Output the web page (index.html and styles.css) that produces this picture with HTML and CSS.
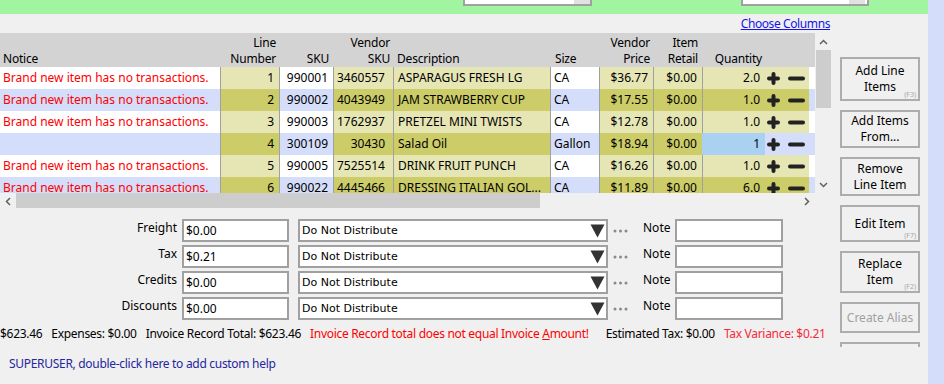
FILE: index.html
```html
<!DOCTYPE html>
<html lang="en">
<head>
    <meta charset="UTF-8">
    <title>Invoice Line Items</title>
    <link rel="stylesheet" href="styles.css">
</head>
<body>
    <div class="app">
        <div class="main">
            <div class="topbar">
                <div class="topbox box-a"><span class="topbox-btn"></span></div>
                <div class="topbox box-b"><span class="topbox-btn"></span></div>
            </div>

            <div class="work">
                <div class="left">
                    <div class="link-row"><a class="choose-link" href="#">Choose Columns</a></div>

                    <div class="grid">
                        <div class="grid-body">
                            <div class="grid-view">
                                <table class="items">
                                    <colgroup>
                                        <col style="width:220px">
                                        <col style="width:59px">
                                        <col style="width:54px">
                                        <col style="width:60px">
                                        <col style="width:157px">
                                        <col style="width:49px">
                                        <col style="width:54px">
                                        <col style="width:49px">
                                        <col style="width:107px">
                                        <col style="width:6px">
                                    </colgroup>
                                    <thead>
                                        <tr>
                                            <th class="h-left">Notice</th>
                                            <th>Line<br>Number</th>
                                            <th class="h-sku">SKU</th>
                                            <th>Vendor<br>SKU</th>
                                            <th class="h-left h-desc">Description</th>
                                            <th class="h-left h-size">Size</th>
                                            <th>Vendor<br>Price</th>
                                            <th class="h-retail">Item<br>Retail</th>
                                            <th class="h-qty">Quantity</th>
                                            <th></th>
                                        </tr>
                                    </thead>
                                    <tbody>
                                        <tr class="odd">
                                            <td class="notice">Brand new item has no transactions.</td>
                                            <td class="ol num">1</td>
                                            <td class="num">990001</td>
                                            <td class="ol num vsku">3460557</td>
                                            <td class="ol desc">ASPARAGUS FRESH LG</td>
                                            <td class="size">CA</td>
                                            <td class="ol num">$36.77</td>
                                            <td class="ol num">$0.00</td>
                                            <td class="ol qty">
                                                <div class="qty-cell">
                                                    <span class="qty-val">2.0</span>
                                                    <span class="qty-btns">
                                                        <svg width="13" height="13" viewBox="0 0 13 13"><path d="M6.5 2v9M2 6.5h9" stroke="#222" stroke-width="4" stroke-linecap="round"/></svg>
                                                        <svg class="minus" width="17" height="13" viewBox="0 0 17 13"><path d="M2 6.5h13" stroke="#222" stroke-width="4" stroke-linecap="round"/></svg>
                                                    </span>
                                                </div>
                                            </td>
                                            <td class="pad"></td>
                                        </tr>
                                        <tr class="even">
                                            <td class="notice">Brand new item has no transactions.</td>
                                            <td class="ol num">2</td>
                                            <td class="num">990002</td>
                                            <td class="ol num vsku">4043949</td>
                                            <td class="ol desc">JAM STRAWBERRY CUP</td>
                                            <td class="size">CA</td>
                                            <td class="ol num">$17.55</td>
                                            <td class="ol num">$0.00</td>
                                            <td class="ol qty">
                                                <div class="qty-cell">
                                                    <span class="qty-val">1.0</span>
                                                    <span class="qty-btns">
                                                        <svg width="13" height="13" viewBox="0 0 13 13"><path d="M6.5 2v9M2 6.5h9" stroke="#222" stroke-width="4" stroke-linecap="round"/></svg>
                                                        <svg class="minus" width="17" height="13" viewBox="0 0 17 13"><path d="M2 6.5h13" stroke="#222" stroke-width="4" stroke-linecap="round"/></svg>
                                                    </span>
                                                </div>
                                            </td>
                                            <td class="pad"></td>
                                        </tr>
                                        <tr class="odd">
                                            <td class="notice">Brand new item has no transactions.</td>
                                            <td class="ol num">3</td>
                                            <td class="num">990003</td>
                                            <td class="ol num vsku">1762937</td>
                                            <td class="ol desc">PRETZEL MINI TWISTS</td>
                                            <td class="size">CA</td>
                                            <td class="ol num">$12.78</td>
                                            <td class="ol num">$0.00</td>
                                            <td class="ol qty">
                                                <div class="qty-cell">
                                                    <span class="qty-val">1.0</span>
                                                    <span class="qty-btns">
                                                        <svg width="13" height="13" viewBox="0 0 13 13"><path d="M6.5 2v9M2 6.5h9" stroke="#222" stroke-width="4" stroke-linecap="round"/></svg>
                                                        <svg class="minus" width="17" height="13" viewBox="0 0 17 13"><path d="M2 6.5h13" stroke="#222" stroke-width="4" stroke-linecap="round"/></svg>
                                                    </span>
                                                </div>
                                            </td>
                                            <td class="pad"></td>
                                        </tr>
                                        <tr class="even">
                                            <td class="notice"></td>
                                            <td class="ol num">4</td>
                                            <td class="num">300109</td>
                                            <td class="ol num vsku">30430</td>
                                            <td class="ol desc">Salad Oil</td>
                                            <td class="size">Gallon</td>
                                            <td class="ol num">$18.94</td>
                                            <td class="ol num">$0.00</td>
                                            <td class="ol qty editing">
                                                <div class="qty-cell">
                                                    <span class="qty-val">1</span>
                                                    <span class="qty-btns">
                                                        <svg width="13" height="13" viewBox="0 0 13 13"><path d="M6.5 2v9M2 6.5h9" stroke="#222" stroke-width="4" stroke-linecap="round"/></svg>
                                                        <svg class="minus" width="17" height="13" viewBox="0 0 17 13"><path d="M2 6.5h13" stroke="#222" stroke-width="4" stroke-linecap="round"/></svg>
                                                    </span>
                                                </div>
                                            </td>
                                            <td class="pad"></td>
                                        </tr>
                                        <tr class="odd">
                                            <td class="notice">Brand new item has no transactions.</td>
                                            <td class="ol num">5</td>
                                            <td class="num">990005</td>
                                            <td class="ol num vsku">7525514</td>
                                            <td class="ol desc">DRINK FRUIT PUNCH</td>
                                            <td class="size">CA</td>
                                            <td class="ol num">$16.26</td>
                                            <td class="ol num">$0.00</td>
                                            <td class="ol qty">
                                                <div class="qty-cell">
                                                    <span class="qty-val">1.0</span>
                                                    <span class="qty-btns">
                                                        <svg width="13" height="13" viewBox="0 0 13 13"><path d="M6.5 2v9M2 6.5h9" stroke="#222" stroke-width="4" stroke-linecap="round"/></svg>
                                                        <svg class="minus" width="17" height="13" viewBox="0 0 17 13"><path d="M2 6.5h13" stroke="#222" stroke-width="4" stroke-linecap="round"/></svg>
                                                    </span>
                                                </div>
                                            </td>
                                            <td class="pad"></td>
                                        </tr>
                                        <tr class="even">
                                            <td class="notice">Brand new item has no transactions.</td>
                                            <td class="ol num">6</td>
                                            <td class="num">990022</td>
                                            <td class="ol num vsku">4445466</td>
                                            <td class="ol desc">DRESSING ITALIAN GOL...</td>
                                            <td class="size">CA</td>
                                            <td class="ol num">$11.89</td>
                                            <td class="ol num">$0.00</td>
                                            <td class="ol qty">
                                                <div class="qty-cell">
                                                    <span class="qty-val">6.0</span>
                                                    <span class="qty-btns">
                                                        <svg width="13" height="13" viewBox="0 0 13 13"><path d="M6.5 2v9M2 6.5h9" stroke="#222" stroke-width="4" stroke-linecap="round"/></svg>
                                                        <svg class="minus" width="17" height="13" viewBox="0 0 17 13"><path d="M2 6.5h13" stroke="#222" stroke-width="4" stroke-linecap="round"/></svg>
                                                    </span>
                                                </div>
                                            </td>
                                            <td class="pad"></td>
                                        </tr>
                                    </tbody>
                                </table>
                            </div>
                            <div class="vscroll">
                                <div class="arrow"><svg width="9" height="6" viewBox="0 0 9 6"><path d="M1 5l3.5-3.5L8 5" stroke="#606060" stroke-width="1.5" fill="none"/></svg></div>
                                <div class="vthumb"></div>
                                <div class="track"></div>
                                <div class="arrow"><svg width="9" height="6" viewBox="0 0 9 6"><path d="M1 1l3.5 3.5L8 1" stroke="#606060" stroke-width="1.5" fill="none"/></svg></div>
                            </div>
                        </div>
                        <div class="hscroll">
                            <div class="arrow h"><svg width="6" height="9" viewBox="0 0 6 9"><path d="M5 1L1.5 4.5 5 8" stroke="#606060" stroke-width="1.5" fill="none"/></svg></div>
                            <div class="hthumb"></div>
                            <div class="track"></div>
                            <div class="arrow h"><svg width="6" height="9" viewBox="0 0 6 9"><path d="M1 1l3.5 3.5L1 8" stroke="#606060" stroke-width="1.5" fill="none"/></svg></div>
                        </div>
                    </div>

                    <div class="charges">
                        <div class="charge-row">
                            <span class="charge-label">Freight</span>
                            <div class="field">$0.00</div>
                            <div class="dist"><span>Do Not Distribute</span><svg width="15" height="14" viewBox="0 0 15 14"><path d="M0.5 0.5h14L7.5 13.5z" fill="#333"/></svg></div>
                            <svg class="dots" width="15" height="4" viewBox="0 0 15 4"><circle cx="2" cy="2" r="1.5" fill="#8a8a8a"/><circle cx="7.5" cy="2" r="1.5" fill="#8a8a8a"/><circle cx="13" cy="2" r="1.5" fill="#8a8a8a"/></svg>
                            <span class="note-label">Note</span>
                            <div class="field note-field"></div>
                        </div>
                        <div class="charge-row">
                            <span class="charge-label">Tax</span>
                            <div class="field">$0.21</div>
                            <div class="dist"><span>Do Not Distribute</span><svg width="15" height="14" viewBox="0 0 15 14"><path d="M0.5 0.5h14L7.5 13.5z" fill="#333"/></svg></div>
                            <svg class="dots" width="15" height="4" viewBox="0 0 15 4"><circle cx="2" cy="2" r="1.5" fill="#8a8a8a"/><circle cx="7.5" cy="2" r="1.5" fill="#8a8a8a"/><circle cx="13" cy="2" r="1.5" fill="#8a8a8a"/></svg>
                            <span class="note-label">Note</span>
                            <div class="field note-field"></div>
                        </div>
                        <div class="charge-row">
                            <span class="charge-label">Credits</span>
                            <div class="field">$0.00</div>
                            <div class="dist"><span>Do Not Distribute</span><svg width="15" height="14" viewBox="0 0 15 14"><path d="M0.5 0.5h14L7.5 13.5z" fill="#333"/></svg></div>
                            <svg class="dots" width="15" height="4" viewBox="0 0 15 4"><circle cx="2" cy="2" r="1.5" fill="#8a8a8a"/><circle cx="7.5" cy="2" r="1.5" fill="#8a8a8a"/><circle cx="13" cy="2" r="1.5" fill="#8a8a8a"/></svg>
                            <span class="note-label">Note</span>
                            <div class="field note-field"></div>
                        </div>
                        <div class="charge-row">
                            <span class="charge-label">Discounts</span>
                            <div class="field">$0.00</div>
                            <div class="dist"><span>Do Not Distribute</span><svg width="15" height="14" viewBox="0 0 15 14"><path d="M0.5 0.5h14L7.5 13.5z" fill="#333"/></svg></div>
                            <svg class="dots" width="15" height="4" viewBox="0 0 15 4"><circle cx="2" cy="2" r="1.5" fill="#8a8a8a"/><circle cx="7.5" cy="2" r="1.5" fill="#8a8a8a"/><circle cx="13" cy="2" r="1.5" fill="#8a8a8a"/></svg>
                            <span class="note-label">Note</span>
                            <div class="field note-field"></div>
                        </div>
                    </div>

                    <div class="summary">
                        <span>$623.46</span>
                        <span>Expenses: $0.00</span>
                        <span>Invoice Record Total: $623.46</span>
                        <span class="warn">Invoice Record total does not equal Invoice <u>A</u>mount!</span>
                        <span class="est">Estimated Tax: $0.00</span>
                        <span class="variance">Tax Variance: $0.21</span>
                    </div>
                </div>

                <div class="actions">
                    <button class="btn b1">Add Line<br>Items<span class="key">(F3)</span></button>
                    <button class="btn b2">Add Items<br>From...</button>
                    <button class="btn b3">Remove<br>Line Item</button>
                    <button class="btn b4">Edit Item<span class="key">(F7)</span></button>
                    <button class="btn b5">Replace<br>Item<span class="key">(F2)</span></button>
                    <button class="btn b6" disabled>Create Alias</button>
                    <button class="btn b7"></button>
                </div>
            </div>

            <div class="help">SUPERUSER, double-click here to add custom help</div>
        </div>
        <div class="strip"></div>
    </div>
</body>
</html>
```

FILE: styles.css
```css
body {
    margin: 0;
    background-color: #f0f0f0;
    font-family: "Noto Sans", sans-serif;
    font-size: 12px;
    color: #000;
}

.app {
    display: flex;
    width: 944px;
    height: 384px;
    overflow: hidden;
}

.main {
    width: 928px;
}

.strip {
    width: 16px;
    background-color: #d4ddf9;
}

/* green header band */
.topbar {
    height: 14px;
    background-color: #a1f5a1;
    display: flex;
    align-items: flex-start;
}

.topbox {
    height: 4px;
    background-color: #fff;
    border: 2px solid #a0a0a0;
    border-top: 0;
    display: flex;
    justify-content: flex-end;
}

.box-a {
    margin-left: 463px;
    width: 125px;
}

.box-b {
    margin-left: 149px;
    width: 124px;
}

.topbox-btn {
    width: 16px;
    background-color: #e1e1e1;
}

.box-b .topbox-btn {
    margin-right: 2px;
}

.work {
    display: flex;
    height: 333px;
}

.left {
    width: 832px;
}

.link-row {
    height: 19px;
    padding: 2px 2px 0 0;
    box-sizing: border-box;
    line-height: 16px;
    text-align: right;
}

.choose-link {
    color: #1414e8;
    text-decoration: underline;
    letter-spacing: -0.4px;
}

/* grid */
.grid-body {
    display: flex;
    height: 160px;
}

.grid-view {
    width: 815px;
    overflow: hidden;
}

.items {
    border-collapse: collapse;
    table-layout: fixed;
    width: 815px;
}

.items th {
    box-sizing: border-box;
    height: 34px;
    padding: 0 3px;
    background-color: #d3d3d3;
    font-weight: normal;
    text-align: right;
    vertical-align: bottom;
    line-height: 16px;
    white-space: nowrap;
    letter-spacing: -0.2px;
}

.items th.h-left {
    text-align: left;
}

.items th.h-sku,
.items th.h-retail {
    padding-right: 4px;
}

.items th.h-desc {
    padding-left: 4px;
}

.items th.h-size {
    padding-left: 5px;
}

.items th.h-qty {
    padding-right: 47px;
}

.items td {
    box-sizing: border-box;
    height: 22px;
    padding: 0 5px;
    line-height: 22px;
    white-space: nowrap;
    overflow: hidden;
    text-overflow: ellipsis;
    box-shadow: inset 1px 0 #a0a0a0;
}

.items td.notice {
    padding-left: 3px;
    color: #f00;
    box-shadow: none;
}

.items td.pad {
    box-shadow: none;
}

.items td.num {
    padding-left: 0;
    text-align: right;
}

.items td.vsku {
    padding-right: 8px;
}

.items td.size {
    padding-left: 4px;
}

.odd td {
    background-color: #fff;
}

.odd td.ol {
    background-color: #e6e6b4;
}

.even td {
    background-color: #d4defa;
}

.even td.ol {
    background-color: #cccc68;
}

.items td.qty {
    padding: 0;
}

.qty-cell {
    display: flex;
    height: 22px;
}

.qty-val {
    width: 63px;
    padding-right: 5px;
    box-sizing: border-box;
    text-align: right;
}

.qty-btns {
    display: flex;
    align-items: center;
    padding-left: 2px;
}

.qty-btns .minus {
    margin-left: 8px;
}

.even td.qty.editing {
    background-color: #d4defa;
}

.editing .qty-val {
    background-color: #aad0f2;
}

/* scrollbars */
.vscroll {
    width: 17px;
    display: flex;
    flex-direction: column;
}

.arrow {
    height: 17px;
    display: flex;
    align-items: center;
    justify-content: center;
    flex-shrink: 0;
}

.arrow.h {
    width: 16px;
    height: 16px;
}

.vthumb {
    height: 58px;
    width: 15px;
    margin-left: 1px;
    background-color: #cdcdcd;
}

.track {
    flex: 1;
}

.hscroll {
    display: flex;
    width: 815px;
    height: 16px;
}

.hthumb {
    width: 524px;
    height: 15px;
    background-color: #cdcdcd;
}

/* freight / tax / credits / discounts */
.charges {
    margin-top: 10px;
    display: flex;
    flex-direction: column;
    gap: 3px;
}

.charge-row {
    display: flex;
    align-items: flex-start;
    height: 23px;
}

.charge-label {
    width: 177px;
    text-align: right;
    line-height: 16px;
    padding-top: 1px;
}

.field {
    box-sizing: border-box;
    width: 107px;
    height: 23px;
    margin-left: 5px;
    padding-left: 2px;
    border: 2px solid #a0a0a0;
    background-color: #fff;
    line-height: 19px;
}

.dist {
    box-sizing: border-box;
    width: 310px;
    height: 23px;
    margin-left: 9px;
    padding: 0 1px 0 2px;
    border: 2px solid #a0a0a0;
    background-color: #fff;
    display: flex;
    align-items: center;
    justify-content: space-between;
    font-family: "DejaVu Sans", sans-serif;
    font-size: 11px;
}

.dots {
    margin: 10px 0 0 5px;
}

.note-label {
    width: 26px;
    margin-left: 15px;
    line-height: 16px;
    padding-top: 1px;
}

.note-field {
    width: 108px;
    margin-left: 6px;
}

.summary {
    margin-top: 6px;
    display: flex;
    gap: 9px;
    line-height: 16px;
    white-space: nowrap;
    letter-spacing: -0.3px;
}

.warn {
    color: #f00;
}

.warn u {
    text-decoration: underline;
}

.est {
    margin-left: 8px;
}

.variance {
    color: #f52a3a;
}

/* side buttons */
.actions {
    box-sizing: border-box;
    width: 80px;
    height: 333px;
    margin-left: 8px;
    padding-top: 43px;
    display: flex;
    flex-direction: column;
    gap: 9px;
    overflow: hidden;
}

.btn {
    position: relative;
    flex-shrink: 0;
    box-sizing: border-box;
    width: 80px;
    padding: 0;
    border: 2px solid #adadad;
    background-color: #f0f0f0;
    font-family: inherit;
    font-size: 12px;
    line-height: 16px;
    color: #000;
    text-align: center;
}

.btn:disabled {
    color: #a0a0a0;
}

.b1 { height: 44px; }
.b2 { height: 38px; }
.b3 { height: 39px; }
.b4 { height: 37px; }
.b5 { height: 42px; }
.b6 { height: 31px; }
.b7 { height: 40px; }

.key {
    position: absolute;
    right: 2px;
    bottom: 1px;
    font-size: 7px;
    line-height: 7px;
    color: #a8a8a8;
}

.help {
    margin-top: 9px;
    padding-left: 9px;
    line-height: 16px;
    color: #26269e;
    letter-spacing: -0.3px;
}
```
